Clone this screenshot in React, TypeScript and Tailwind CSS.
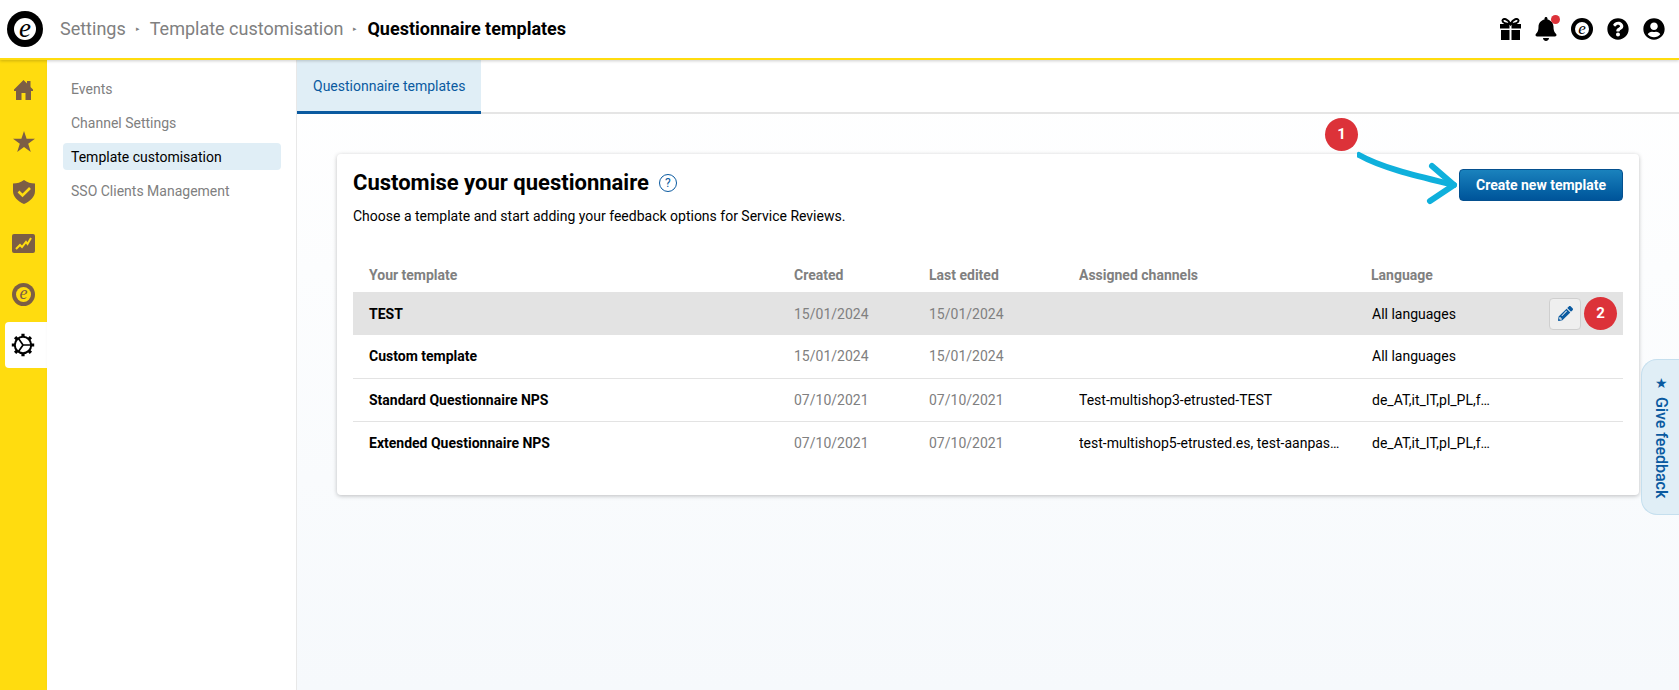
import { FaBell, FaPencilAlt, FaQuestionCircle, FaUserCircle } from 'react-icons/fa';

const rows = [
  { name: 'TEST', created: '15/01/2024', edited: '15/01/2024', channels: '', lang: 'All languages', active: true },
  { name: 'Custom template', created: '15/01/2024', edited: '15/01/2024', channels: '', lang: 'All languages' },
  { name: 'Standard Questionnaire NPS', created: '07/10/2021', edited: '07/10/2021', channels: 'Test-multishop3-etrusted-TEST', lang: 'de_AT,it_IT,pl_PL,fr_FR,en_GB' },
  { name: 'Extended Questionnaire NPS', created: '07/10/2021', edited: '07/10/2021', channels: 'test-multishop5-etrusted.es, test-aanpassing-nl', lang: 'de_AT,it_IT,pl_PL,fr_FR,en_GB' },
];

const subNav = ['Events', 'Channel Settings', 'Template customisation', 'SSO Clients Management'];

function LogoE({ size, inner, bg, mid, fg }: { size: string; inner: string; bg: string; mid: string; fg: string }) {
  return (
    <span className={`flex items-center justify-center rounded-full ${size} ${bg}`}>
      <span className={`flex items-center justify-center rounded-full ${inner} ${mid}`}>
        <span className={`-mt-[2px] font-['Liberation_Serif',serif] italic leading-none ${fg}`}>e</span>
      </span>
    </span>
  );
}

function House() {
  return (
    <svg width="19" height="20" viewBox="0 0 19 20" fill="#7c5e45">
      <path d="M9.5 0 L19 9.5 V11 H17 V20 H11.5 V13 H7.5 V20 H2 V11 H0 V9.5 Z" />
      <rect x="13" y="1" width="3.5" height="6" />
    </svg>
  );
}

function Star() {
  return (
    <svg width="22" height="21" viewBox="0 0 22 21" fill="#7c5e45">
      <polygon points="11,0 13.6,7.8 22,7.8 15.2,12.8 17.8,21 11,16 4.2,21 6.8,12.8 0,7.8 8.4,7.8" />
    </svg>
  );
}

function Shield() {
  return (
    <svg width="22" height="24" viewBox="0 0 22 24">
      <path d="M11 0 C14 2.5 18 3.5 22 3.5 V11 C22 17 17 21.5 11 24 C5 21.5 0 17 0 11 V3.5 C4 3.5 8 2.5 11 0 Z" fill="#7c5e45" />
      <path d="M5.5 11.5 L9.5 15.5 L17 8" fill="none" stroke="#ffdc0f" strokeWidth="2.6" />
    </svg>
  );
}

function Chart() {
  return (
    <svg width="23" height="19" viewBox="0 0 23 19">
      <rect width="23" height="19" rx="2" fill="#7c5e45" />
      <path d="M4 15 L8 11 L10 13 L14 8 L15.5 10 L19 4" fill="none" stroke="#ffdc0f" strokeWidth="2" />
    </svg>
  );
}

function Gear() {
  return (
    <svg width="24" height="24" viewBox="0 0 24 24" fill="none" stroke="#000">
      <circle cx="12" cy="12" r="8.2" strokeWidth="2" />
      <path d="M12 12 L7.5 5.5 M12 12 L7.5 18.5 M12 12 H20" strokeWidth="1.7" />
      <path
        d="M12 .8 V4 M12 20 V23.2 M.8 12 H4 M20 12 H23.2 M4.1 4.1 L6.3 6.3 M17.7 17.7 L19.9 19.9 M4.1 19.9 L6.3 17.7 M17.7 6.3 L19.9 4.1"
        strokeWidth="3.2"
      />
    </svg>
  );
}

function Gift() {
  return (
    <svg width="21" height="22" viewBox="0 0 21 22" fill="#000">
      <path d="M10.5 6 C8 1 3 -.5 2.5 2.5 C2.2 4.8 6 6 10.5 6 C15 6 18.8 4.8 18.5 2.5 C18 -.5 13 1 10.5 6 Z" fill="none" stroke="#000" strokeWidth="2" />
      <rect x="0" y="6" width="9.5" height="4.5" />
      <rect x="11.5" y="6" width="9.5" height="4.5" />
      <rect x="1" y="12" width="8.5" height="10" />
      <rect x="11.5" y="12" width="8.5" height="10" />
    </svg>
  );
}

function Step({ n }: { n: number }) {
  return (
    <span className="flex h-[33px] w-[33px] items-center justify-center rounded-full bg-[#dc3239] text-[15px] font-bold text-white">
      {n}
    </span>
  );
}

export default function App() {
  return (
    <div className="flex h-[690px] w-[1679px] flex-col overflow-hidden bg-white font-['Roboto',sans-serif] text-sm text-black">
      {/* Header */}
      <header className="relative z-10 flex h-[60px] shrink-0 items-center border-b-[2px] border-[#ffdc0f] bg-white pl-[7px] pr-[14px] shadow-[0_1px_3px_rgba(0,0,0,0.2)]">
        <LogoE size="h-[36px] w-[36px]" inner="h-[22px] w-[22px] text-[27px]" bg="bg-black" mid="bg-white" fg="text-black" />
        <nav className="ml-[17px] flex items-center text-lg text-[#808080]">
          <span>Settings</span>
          <span className="mx-[10px] text-[7px]">▸</span>
          <span>Template customisation</span>
          <span className="mx-[10px] text-[7px]">▸</span>
          <span className="font-bold text-black">Questionnaire templates</span>
        </nav>
        <div className="ml-auto flex items-center gap-[14px] text-[22px]">
          <span className="-mr-[1px]"><Gift /></span>
          <span className="relative -mr-[1px] text-[24px]">
            <FaBell />
            <span className="absolute -top-[2px] -right-[2px] h-[9px] w-[9px] rounded-full bg-[#dc3239]" />
          </span>
          <LogoE size="h-[22px] w-[22px]" inner="h-[14px] w-[14px] text-[17px]" bg="bg-black" mid="bg-white" fg="text-black" />
          <FaQuestionCircle />
          <FaUserCircle />
        </div>
      </header>

      <div className="flex min-h-0 flex-1">
        {/* Icon rail */}
        <aside className="flex w-[47px] shrink-0 flex-col gap-[5px] bg-[#ffdc0f] pl-[5px] pt-[7px] text-[#7c5e45]">
          <div className="flex h-[46px] items-center justify-center pr-[5px]"><House /></div>
          <div className="flex h-[46px] items-center justify-center pr-[5px]"><Star /></div>
          <div className="flex h-[46px] items-center justify-center pr-[5px]"><Shield /></div>
          <div className="flex h-[46px] items-center justify-center pr-[5px]"><Chart /></div>
          <div className="flex h-[46px] items-center justify-center pr-[5px]">
            <LogoE size="h-[23px] w-[23px]" inner="h-[15px] w-[15px] text-[18px]" bg="bg-[#7c5e45]" mid="bg-[#ffdc0f]" fg="text-[#7c5e45]" />
          </div>
          <div className="flex h-[46px] items-center justify-center rounded-l bg-white pr-[7px]"><Gear /></div>
        </aside>

        {/* Secondary nav */}
        <aside className="flex w-[250px] shrink-0 flex-col gap-[7px] border-r border-[#e8e8e8] pl-4 pr-[15px] pt-[15px] shadow-[1px_0_3px_rgba(0,0,0,0.08)]">
          {subNav.map((item) => (
            <div
              key={item}
              className={
                item === 'Template customisation'
                  ? 'flex h-[27px] items-center rounded bg-[#e0eef6] px-2 text-black'
                  : 'flex h-[27px] items-center px-2 text-[#808080]'
              }
            >
              {item}
            </div>
          ))}
        </aside>

        {/* Main */}
        <main className="relative min-w-0 flex-1 bg-gradient-to-b from-white to-[#f6f9fc]">
          <div className="flex h-[54px] border-b-[2px] border-[#e5e5e5] bg-white">
            <div className="-mb-[2px] flex h-[54px] items-center border-b-[3px] border-[#0a5aa0] bg-[#e0eef6] px-4 text-[#0a5aa0]">
              Questionnaire templates
            </div>
          </div>

          <section className="ml-10 mr-10 mt-10 rounded bg-white px-4 pb-[31px] pt-4 shadow-[0_1px_4px_rgba(0,0,0,0.25)]">
            <div className="flex items-start justify-between">
              <div>
                <h1 className="flex items-center gap-[10px] text-[22px] font-bold leading-[26px]">
                  Customise your questionnaire
                  <span className="flex h-[18px] w-[18px] items-center justify-center rounded-full border-[1.5px] border-[#0a5aa0] text-xs font-normal text-[#0a5aa0]">?</span>
                </h1>
                <p className="mt-[10px]">Choose a template and start adding your feedback options for Service Reviews.</p>
              </div>
              <button className="-mt-[1px] h-8 w-[164px] rounded border border-[#04508f] bg-gradient-to-b from-[#1a82bd] to-[#00549a] font-bold text-white">
                Create new template
              </button>
            </div>

            <table className="mt-[32px] w-full table-fixed border-collapse text-left">
              <thead>
                <tr className="h-[34px] font-bold text-[#808080]">
                  <th className="w-[441px] pl-4 font-bold">Your template</th>
                  <th className="w-[135px] font-bold">Created</th>
                  <th className="w-[150px] font-bold">Last edited</th>
                  <th className="w-[292px] font-bold">Assigned channels</th>
                  <th className="font-bold">Language</th>
                </tr>
              </thead>
              <tbody>
                {rows.map((row) => (
                  <tr
                    key={row.name}
                    className={
                      row.active
                        ? 'h-[43px] bg-[#e3e3e3]'
                        : row.name === 'Custom template' || row.name.startsWith('Standard')
                          ? 'h-[43px] border-b border-[#e3e3e3]'
                          : 'h-[43px]'
                    }
                  >
                    <td className="pl-4 font-bold">{row.name}</td>
                    <td className="text-[#808080]">{row.created}</td>
                    <td className="text-[#808080]">{row.edited}</td>
                    <td className="pr-[31px]"><div className="truncate">{row.channels}</div></td>
                    <td>
                      <div className="flex items-center justify-between pr-[6px]">
                        <span className="w-[123px] truncate pl-[1px]">{row.lang}</span>
                        {row.active && (
                          <span className="flex items-center gap-[3px]">
                            <span className="flex h-8 w-8 items-center justify-center rounded border border-[#cfcfcf] bg-[#efefef] text-[15px] text-[#0a5aa0]"><FaPencilAlt /></span>
                            <Step n={2} />
                          </span>
                        )}
                      </div>
                    </td>
                  </tr>
                ))}
              </tbody>
            </table>
          </section>

          {/* Tutorial annotation */}
          <div className="absolute left-[1028px] top-[58px]"><Step n={1} /></div>
          <svg className="absolute left-[1060px] top-[91px]" width="105" height="60" viewBox="0 0 105 60" fill="none" stroke="#0fb0dc" strokeWidth="6" strokeLinecap="round" strokeLinejoin="round">
            <path d="M2 4 C25 17 60 25 97 34" />
            <path d="M75 15 L97 34 L73 50" />
          </svg>

          <button className="absolute right-0 top-[299px] flex h-[156px] w-[38px] items-center justify-center gap-[6px] rounded-l-2xl border border-r-0 border-[#c5dfee] bg-[#e0eef6] text-base font-medium text-[#0a5aa0] [writing-mode:vertical-rl]">
            <span className="text-sm">★</span> Give feedback
          </button>
        </main>
      </div>
    </div>
  );
}
